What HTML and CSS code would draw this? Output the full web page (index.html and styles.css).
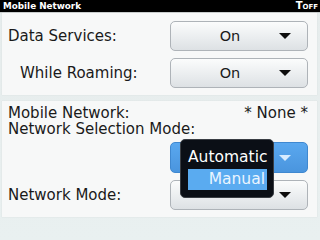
FILE: index.html
```html
<!DOCTYPE html>
<html>
<head>
<meta charset="utf-8">
<link rel="stylesheet" href="styles.css">
</head>
<body>
<div class="screen">
  <div class="titlebar">
    <span class="title">Mobile Network</span>
    <span class="status"><span class="big">T</span>OFF</span>
  </div>
  <div class="panel panel1">
    <div class="row">
      <span class="label">Data Services:</span>
      <div class="dropdown"><span class="val">On</span><span class="arrow"></span></div>
    </div>
    <div class="row">
      <span class="label indent">While Roaming:</span>
      <div class="dropdown"><span class="val">On</span><span class="arrow"></span></div>
    </div>
  </div>
  <div class="panel panel2">
    <div class="line">
      <span class="label">Mobile Network:</span>
      <span class="label">* None *</span>
    </div>
    <div class="line">
      <span class="label">Network Selection Mode:</span>
    </div>
    <div class="row2 right">
      <div class="dropdown blue"><span class="val"></span><span class="arrow white"></span></div>
    </div>
    <div class="row2 last">
      <span class="label">Network Mode:</span>
      <div class="dropdown"><span class="val"></span><span class="arrow"></span></div>
    </div>
    <div class="popup">
      <div class="opt">Automatic</div>
      <div class="opt sel">Manual</div>
    </div>
  </div>
</div>
</body>
</html>
```
FILE: styles.css
```css
html, body {
  margin: 0;
  padding: 0;
}
body {
  width: 320px;
  height: 240px;
  overflow: hidden;
  background: linear-gradient(#e6ecec, #e9f0f0);
  font-family: "DejaVu Sans", sans-serif;
  color: #1a1a1a;
}
.screen {
  display: flex;
  flex-direction: column;
}
.titlebar {
  height: 12px;
  background: #000;
  color: #fff;
  display: flex;
  justify-content: space-between;
  align-items: center;
  padding: 0 2px 0 3px;
  border-bottom: 1px solid #c8cccc;
}
.title {
  font-weight: bold;
  font-size: 8.8px;
  line-height: 12px;
}
.status {
  font-weight: bold;
  font-size: 7px;
  line-height: 12px;
}
.status .big {
  font-size: 10px;
}
.panel {
  background: #f7f8f8;
  margin: 0 3px 0 2px;
  box-shadow: 0 0 1px #d0d6d6;
}
.panel1 {
  padding: 8px 9px 7px 6px;
  display: flex;
  flex-direction: column;
  gap: 7px;
}
.row {
  display: flex;
  justify-content: space-between;
  align-items: center;
  height: 30px;
}
.label {
  font-size: 15px;
  line-height: 16px;
  white-space: nowrap;
}
.indent {
  margin-left: 12px;
}
.dropdown {
  width: 138px;
  height: 30px;
  border: 1px solid #aeb3b8;
  border-radius: 5px;
  background: linear-gradient(#fbfcfc, #e9ecee 60%, #dde1e4);
  display: flex;
  align-items: center;
  box-sizing: border-box;
}
.val {
  flex: 1;
  text-align: center;
  font-size: 14.5px;
  padding-left: 10px;
}
.arrow {
  width: 0;
  height: 0;
  border-left: 6px solid transparent;
  border-right: 6px solid transparent;
  border-top: 6px solid #0d0d0d;
  margin-right: 16px;
}
.arrow.white {
  border-top-color: #d8ecff;
}
.dropdown.blue {
  background: linear-gradient(#5aa8ef, #4a95de);
  border-color: #3f88d0;
  height: 31px;
}
.panel2 {
  margin-top: 6px;
  padding: 4px 9px 7px 6px;
  position: relative;
  display: flex;
  flex-direction: column;
}
.line {
  display: flex;
  justify-content: space-between;
  height: 16px;
  overflow: visible;
}
.row2 {
  display: flex;
  justify-content: space-between;
  align-items: center;
  margin-top: 5px;
}
.row2.right {
  justify-content: flex-end;
}
.row2.last {
  margin-top: 7px;
}
.popup {
  position: absolute;
  left: 178px;
  top: 38px;
  width: 94px;
  height: 59px;
  box-sizing: border-box;
  background: #0b0f16;
  border: 1px solid #3a3e44;
  border-radius: 5px;
  padding: 8px 6px 0 7px;
  color: #fff;
  font-size: 15.5px;
}
.opt {
  line-height: 19px;
  text-align: right;
  padding-right: 2px;
}
.opt.sel {
  background: #5aabf0;
  margin-top: 2px;
  color: #eaf5ff;
  line-height: 21px;
}
```
